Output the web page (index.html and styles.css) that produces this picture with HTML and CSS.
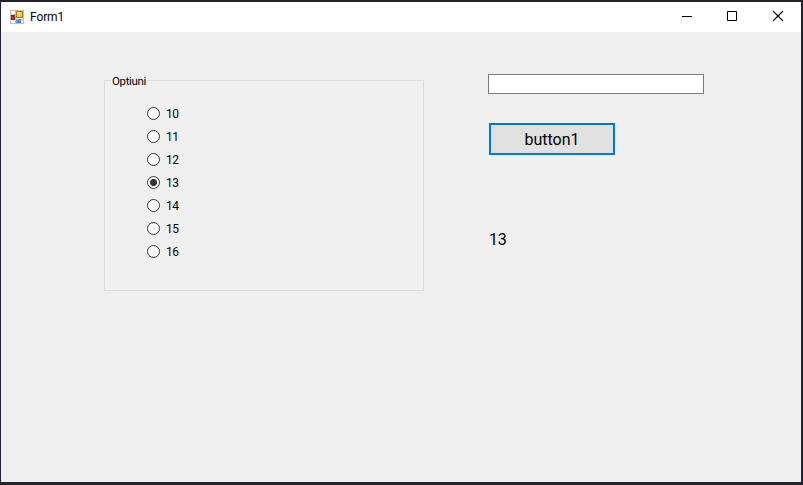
FILE: index.html
```
<!DOCTYPE html>
<html lang="ro">
<head>
<meta charset="utf-8">
<title>Form1</title>
<link rel="stylesheet" href="styles.css">
</head>
<body>
<div class="window">
  <header class="titlebar">
    <svg class="app-icon" width="14" height="14" viewBox="0 0 14 14" shape-rendering="crispEdges">
      <defs>
        <linearGradient id="gold" x1="0" y1="0" x2="1" y2="1"><stop offset="0" stop-color="#ffe98a"/><stop offset="1" stop-color="#eeb010"/></linearGradient>
        <linearGradient id="blue" x1="0" y1="0" x2="1" y2="1"><stop offset="0" stop-color="#79adf2"/><stop offset="1" stop-color="#3573cf"/></linearGradient>
      </defs>
      <path fill="#fff" stroke="#bdbdbd" d="M.5.5h13v13H.5z"/>
      <path fill="none" stroke="#bdbdbd" d="M5.5 0v14M0 4.5h6M0 9.5h14"/>
      <path fill="url(#gold)" stroke="#a87a18" d="M6.500 1.500h6v6h-6z"/>
      <path fill="#c42a20" stroke="#922018" d="M1.500 5.500h3v4h-3z"/>
      <path fill="url(#blue)" d="M6 9h5v4H6z"/>
    </svg>
    <span class="title">Form1</span>
    <div class="controls">
      <svg width="45" height="30" viewBox="0 0 45 30" fill="none" stroke="#000"><path d="M18 14.500h10"/></svg>
      <svg width="45" height="30" viewBox="0 0 45 30" fill="none" stroke="#000"><path d="M18.500 9.500h9v9h-9z"/></svg>
      <svg width="47" height="30" viewBox="0 0 47 30" fill="none" stroke="#000"><path stroke-width="1.100" d="M19 9l10 10M29 9L19 19"/></svg>
    </div>
  </header>
  <main class="client">
    <section class="group">
      <h2 class="legend">Optiuni</h2>
      <div class="options">
        <label class="option"><input type="radio" name="n">10</label>
        <label class="option"><input type="radio" name="n">11</label>
        <label class="option"><input type="radio" name="n">12</label>
        <label class="option"><input type="radio" name="n" checked>13</label>
        <label class="option"><input type="radio" name="n">14</label>
        <label class="option"><input type="radio" name="n">15</label>
        <label class="option"><input type="radio" name="n">16</label>
      </div>
    </section>
    <section class="side">
      <input class="field" type="text">
      <button class="button" type="button">button1</button>
      <output class="result">13</output>
    </section>
  </main>
</div>
</body>
</html>
```
FILE: styles.css
```
* { box-sizing: border-box; }
body {
  margin: 0;
  height: 485px;
  padding: 2px 2px 3px 1px;
  background: #23212d;
  color: #000;
  font: 12px/16px Roboto, sans-serif;
  overflow: hidden;
}
.window { height: 480px; background: #f0f0f0; }
.titlebar {
  display: flex;
  align-items: center;
  height: 30px;
  padding-left: 9px;
  background: #fff;
}
.title { margin-left: 6px; letter-spacing: -0.1px; }
.controls { display: flex; margin-left: auto; }
.controls svg { display: block; }
.client { display: flex; align-items: flex-start; padding: 42px 0 0 103px; }
.group {
  width: 320px;
  height: 211px;
  margin-top: 6px;
  border: 1px solid #dcdcdc;
}
.legend {
  width: max-content;
  margin: -8px 0 0 6px;
  padding: 0 2px 0 1px;
  background: #f0f0f0;
  font-size: 11.500px;
  font-weight: 400;
  line-height: 16px;
  letter-spacing: -0.35px;
}
.options { padding: 13px 0 0 42px; }
.option { display: flex; align-items: center; height: 23px; letter-spacing: -0.6px; }
.option input {
  appearance: none;
  width: 13px;
  height: 13px;
  margin: 0 6px 0 0;
  border: 1px solid #333;
  border-radius: 50%;
  background: #fff;
}
.option input:checked { background: radial-gradient(circle, #333 3.2px, #fff 3.900px); }
.side { display: flex; flex-direction: column; align-items: flex-start; margin-left: 64px; }
.field { width: 216px; height: 20px; padding: 0 2px; border: 1px solid #7a7a7a; background: #fff; }
.button {
  width: 126px;
  height: 32px;
  margin: 29px 0 0 1px;
  padding: 1px 0 0;
  border: 2px solid #0078d7;
  background: #e1e1e1;
  color: #000;
  font: 16px/27px Roboto, sans-serif;
}
.result { margin: 75px 0 0; font-size: 16px; line-height: 20px; letter-spacing: -0.3px; padding-left: 1px; }
```
